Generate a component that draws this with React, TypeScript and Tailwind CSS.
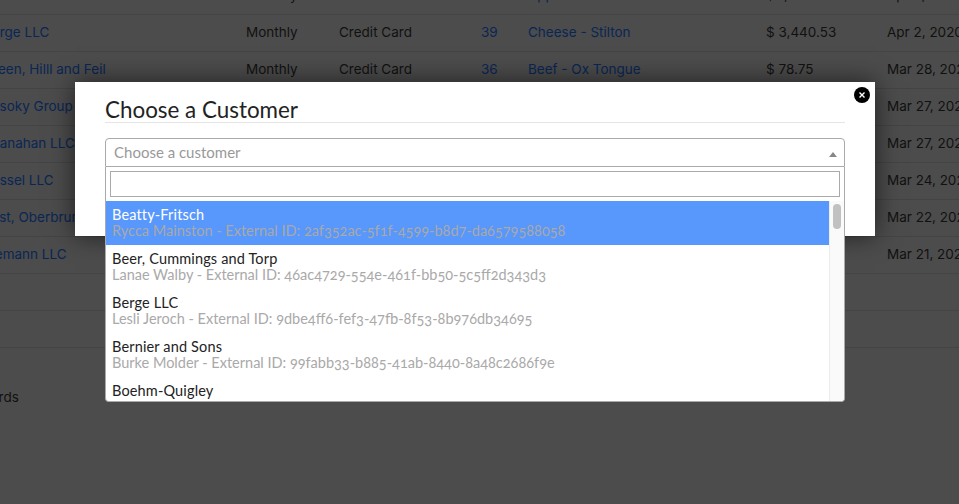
const FILAS = [
  { cliente: "Berge LLC", cant: "39", producto: "Cheese - Stilton", monto: "$ 3,440.53", fecha: "Apr 2, 2020" },
  { cliente: "Green, Hilll and Feil", cant: "36", producto: "Beef - Ox Tongue", monto: "$ 78.75", fecha: "Mar 28, 2020" },
  { cliente: "Wisoky Group", cant: "12", producto: "Wine - Merlot", monto: "$ 512.40", fecha: "Mar 27, 2020" },
  { cliente: "Shanahan LLC", cant: "27", producto: "Pepper - Red", monto: "$ 120.10", fecha: "Mar 27, 2020" },
  { cliente: "Kassel LLC", cant: "18", producto: "Flour - Rye", monto: "$ 64.20", fecha: "Mar 24, 2020" },
  { cliente: "Yost, Oberbrunner", cant: "41", producto: "Salmon - Smoked", monto: "$ 930.00", fecha: "Mar 22, 2020" },
  { cliente: "Ziemann LLC", cant: "22", producto: "Lemon - Zest", monto: "$ 210.75", fecha: "Mar 21, 2020" },
];

const OPCIONES = [
  { nombre: "Beatty-Fritsch", detalle: "Rycca Mainston - External ID: 2af352ac-5f1f-4599-b8d7-da6579588058" },
  { nombre: "Beer, Cummings and Torp", detalle: "Lanae Walby - External ID: 46ac4729-554e-461f-bb50-5c5ff2d343d3" },
  { nombre: "Berge LLC", detalle: "Lesli Jeroch - External ID: 9dbe4ff6-fef3-47fb-8f53-8b976db34695" },
  { nombre: "Bernier and Sons", detalle: "Burke Molder - External ID: 99fabb33-b885-41ab-8440-8a48c2686f9e" },
  { nombre: "Boehm-Quigley", detalle: "" },
];

const COLUMNAS = "grid grid-cols-[263px_93px_142px_47px_238px_121px_120px] items-center";

function Fila({ cliente, cant, producto, monto, fecha }: (typeof FILAS)[number]) {
  return (
    <div className={`${COLUMNAS} h-[37px] border-b border-[#444444] pb-[2px]`}>
      <a className="text-[#0a2654]">{cliente}</a>
      <span>Monthly</span>
      <span>Credit Card</span>
      <a className="text-[#0a2654]">{cant}</a>
      <a className="text-[#0a2654]">{producto}</a>
      <span>{monto}</span>
      <span className="whitespace-nowrap">{fecha}</span>
    </div>
  );
}

export default function App() {
  return (
    <div className="relative h-[504px] w-[959px] overflow-hidden bg-[#4c4c4c] font-['Inter',sans-serif] text-[13.5px] text-[#111111]">
      <div className="-ml-[17px] -mt-[22px] w-[1100px]">
        <Fila cliente="Lorem LLC" cant="40" producto="Apples - Green" monto="$ 1,204.00" fecha="Apr 3, 2020" />
        {FILAS.map((f) => (
          <Fila key={f.cliente} {...f} />
        ))}
        <div className="h-[37px] border-b border-[#444444]" />
        <div className="h-[37px] border-b border-[#444444]" />
        <div className="-ml-[13px] mt-[39px]">records</div>
      </div>

      <div className="absolute left-[75px] top-[82px] h-[154px] w-[800px] bg-white px-[30px] pt-[16px] shadow-[0_0_24px_rgba(0,0,0,0.6)] font-['Lato',sans-serif]">
        <button className="absolute right-[5px] top-[5px] flex h-4 w-4 items-center justify-center rounded-full bg-black">
          <svg width="8" height="8" viewBox="0 0 8 8" stroke="#ffffff" strokeWidth="1.4">
            <path d="M1.5 1.5l5 5M6.5 1.5l-5 5" />
          </svg>
        </button>
        <h2 className="h-[25px] border-b border-[#e5e5e5] text-[22.4px] leading-[24px] text-[#222222]">Choose a Customer</h2>
      </div>

      <div className="absolute left-[105px] top-[138px] w-[740px] font-['Lato',sans-serif]">
        <div className="flex h-[29px] items-center justify-between rounded-t-[4px] border border-[#aaaaaa] bg-white pl-2 pr-[7px] text-[15px] text-[#999999]">
          <span>Choose a customer</span>
          <span className="mt-[3px] h-0 w-0 border-x-[4px] border-b-[5px] border-x-transparent border-b-[#888888]" />
        </div>
        <div className="h-[235px] overflow-hidden rounded-b-[4px] border border-t-0 border-[#aaaaaa] bg-white">
          <div className="p-1">
            <input className="block h-[26px] w-full border border-[#aaaaaa] bg-white" />
          </div>
          <div className="flex">
            <ul className="w-[723px]">
              {OPCIONES.map((o, i) => (
                <li
                  key={o.nombre}
                  className={`h-[44px] px-[6px] pt-[6px] text-[14.5px] leading-4 ${i === 0 ? "bg-[#5897fb] text-white" : "text-[#222222]"}`}
                >
                  <div className="tracking-[0.15px]">{o.nombre}</div>
                  <div className="oldstyle-nums whitespace-nowrap text-[#a9a9a9]">{o.detalle}</div>
                </li>
              ))}
            </ul>
            <div className="h-[200px] w-[15px] border-l border-[#ececec] bg-[#fafafa] px-[3px] pt-[3px]">
              <div className="h-[25px] w-[8px] rounded-full bg-[#c1c1c1]" />
            </div>
          </div>
        </div>
      </div>
    </div>
  );
}
